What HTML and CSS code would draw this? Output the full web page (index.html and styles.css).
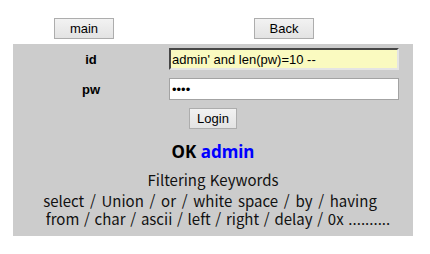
FILE: index.html
```html
<!DOCTYPE html>
<html lang="ko">
<head>
    <meta charset="UTF-8">
    <title>Login</title>
    <link rel="stylesheet" href="styles.css">
</head>
<body>
    <div class="nav">
        <button class="btn">main</button>
        <button class="btn">Back</button>
    </div>
    <form class="box">
        <div class="row">
            <label class="lbl" for="id">id</label>
            <input type="text" id="id" class="field filled" value="admin' and len(pw)=10 --">
        </div>
        <div class="row">
            <label class="lbl" for="pw">pw</label>
            <input type="password" id="pw" class="field" value="1234">
        </div>
        <div class="act">
            <button type="button" class="btn login">Login</button>
        </div>
        <p class="ok">OK <span class="who">admin</span></p>
        <p class="title">Filtering Keywords</p>
        <p class="kw">
            <span class="line first">select / Union / or / white space / by / having</span>
            <span class="line second">from / char / ascii / left / right / delay / 0x ..........</span>
        </p>
    </form>
</body>
</html>
```

FILE: styles.css
```css
*{
    margin:0;
    box-sizing: border-box;
}
body{
    background: #ffffff;
    font-family: "Liberation Sans", Arial, sans-serif;
    font-size: 13px;
}
.nav{
    display: flex;
    gap: 140px;
    padding: 18px 0 0 54px;
}
.btn{
    width: 60px;
    height: 21px;
    padding: 0;
    font-family: "Liberation Sans", Arial, sans-serif;
    font-size: 13px;
    color: #000;
    border: 1px solid #adadad;
    background: linear-gradient(#f2f2f2, #e3e3e3);
}
.box{
    width: 400px;
    margin: 5px 0 0 13px;
    padding: 4px 0 0;
    height: 192px;
    background: #cccccc;
    text-align: center;
}
.row{
    display: grid;
    grid-template-columns: 156px 230px;
    align-items: center;
    margin-bottom: 8px;
}
.lbl{
    font-weight: bold;
    font-size: 13px;
}
.field{
    height: 22px;
    padding: 0 2px;
    font-family: "Liberation Sans", Arial, sans-serif;
    font-size: 13px;
    color: #000;
    background: #ffffff;
    border: 1px solid #a3a3a3;
    outline: none;
}
.filled{
    background: #fafac0;
    border: 2px inset #e0e0e0;
    border-color: #9a9a9a #e4e4e4 #e4e4e4 #9a9a9a;
    padding: 0 1px;
}
.act{
    display: flex;
    justify-content: center;
}
.login{
    width: 48px;
}
.ok{
    margin-top: 12px;
    font-family: "Noto Sans", "Noto Sans CJK KR", sans-serif;
    font-weight: bold;
    font-size: 17px;
    line-height: 22px;
}
.who{
    color: #0000ff;
}
.title, .kw{
    font-family: "Noto Sans CJK KR", "Noto Sans", sans-serif;
    font-size: 15px;
    color: #111;
}
.title{
    margin-top: 4px;
    line-height: 25px;
}
.line{
    display: block;
    line-height: 18px;
    white-space: nowrap;
}
.first{
    word-spacing: 1.5px;
    padding-right: 6px;
}
.second{
    word-spacing: 0.5px;
    padding-left: 10px;
}
```
